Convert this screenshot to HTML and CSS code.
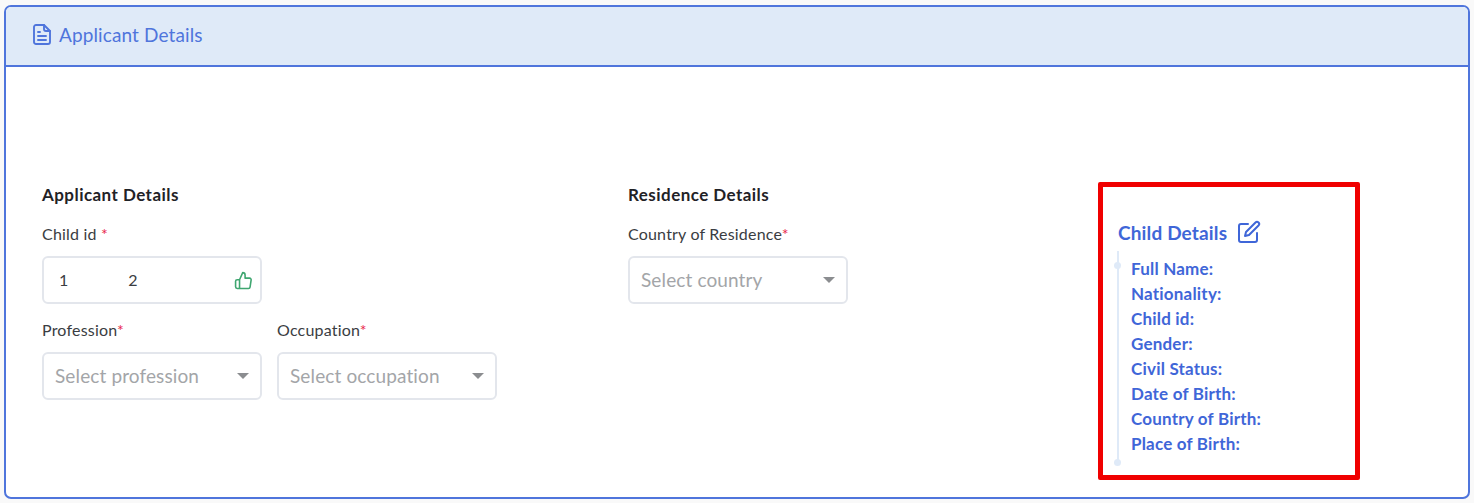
FILE: index.html
```html
<!DOCTYPE html>
<html lang="en">
<head>
<meta charset="utf-8">
<title>Applicant Details</title>
<link rel="stylesheet" href="styles.css">
</head>
<body>
<main class="card">
  <header class="card-header">
    <svg class="header-icon" viewBox="0 0 18 21" fill="none" stroke="currentColor" stroke-width="1.9" stroke-linecap="round" stroke-linejoin="round">
      <path d="M3 1h8l6 6v11a2 2 0 0 1-2 2H3a2 2 0 0 1-2-2V3a2 2 0 0 1 2-2z"/>
      <path d="M11 1v4a2 2 0 0 0 2 2h4"/>
      <path d="M5 8h2M5 12h8M5 16h8"/>
    </svg>
    <h1 class="card-title">Applicant Details</h1>
  </header>
  <div class="card-body">
    <section class="col-applicant">
      <h2 class="section-title">Applicant Details</h2>
      <div class="field-grid">
        <div class="field">
          <label class="field-label">Child id <span class="req">*</span></label>
          <div class="control">
            <span class="value-group"><span>1</span><span>2</span></span>
            <svg class="thumb" viewBox="0 0 24 24" fill="none" stroke="currentColor" stroke-width="2" stroke-linecap="round" stroke-linejoin="round">
              <path d="M14 9V5a3 3 0 0 0-3-3l-4 9v11h11.28a2 2 0 0 0 2-1.7l1.38-9a2 2 0 0 0-2-2.3zM7 22H4a2 2 0 0 1-2-2v-7a2 2 0 0 1 2-2h3"/>
            </svg>
          </div>
        </div>
        <div></div>
        <div class="field">
          <label class="field-label">Profession<span class="req">*</span></label>
          <div class="control">
            <span class="placeholder">Select profession</span><span class="caret"></span>
          </div>
        </div>
        <div class="field">
          <label class="field-label">Occupation<span class="req">*</span></label>
          <div class="control">
            <span class="placeholder">Select occupation</span><span class="caret"></span>
          </div>
        </div>
      </div>
    </section>
    <section class="col-residence">
      <h2 class="section-title">Residence Details</h2>
      <div class="field">
        <label class="field-label">Country of Residence<span class="req">*</span></label>
        <div class="control">
          <span class="placeholder">Select country</span><span class="caret"></span>
        </div>
      </div>
    </section>
    <aside class="child-box">
      <div class="child-head">
        <h2 class="child-title">Child Details</h2>
        <svg class="edit" viewBox="0 0 24 24" fill="none" stroke="currentColor" stroke-width="2" stroke-linecap="round" stroke-linejoin="round">
          <path d="M11 4H4a2 2 0 0 0-2 2v14a2 2 0 0 0 2 2h14a2 2 0 0 0 2-2v-7"/>
          <path d="M18.5 2.5a2.121 2.121 0 0 1 3 3L12 15l-4 1 1-4 9.5-9.5z"/>
        </svg>
      </div>
      <ul class="child-list">
        <li>Full Name:</li>
        <li>Nationality:</li>
        <li>Child id:</li>
        <li>Gender:</li>
        <li>Civil Status:</li>
        <li>Date of Birth:</li>
        <li>Country of Birth:</li>
        <li>Place of Birth:</li>
      </ul>
    </aside>
  </div>
</main>
</body>
</html>
```
FILE: styles.css
```css
* { box-sizing: border-box; }
html, body { margin: 0; padding: 0; }
body {
  background: #f9f9f9;
  font-family: "Lato", "Open Sans", sans-serif;
  height: 503px;
  overflow: hidden;
  padding: 5px 4px 4px 4px;
}
.card {
  height: 494px;
  background: #fff;
  border: 2px solid #4f75dc;
  border-radius: 7px;
  overflow: hidden;
}
.card-header {
  height: 60px;
  background: #dfeaf8;
  border-bottom: 2px solid #4f75dc;
  display: flex;
  align-items: center;
  gap: 8px;
  padding: 0 0 3px 27px;
  color: #4f75dc;
}
.header-icon { width: 18px; height: 21px; flex: none; }
.card-title { margin: 0; font-size: 19px; font-weight: 400; letter-spacing: 0.12px; }
.card-body {
  display: flex;
  align-items: flex-start;
  padding: 115px 0 0 36px;
}
.col-applicant { width: 455px; margin-right: 131px; }
.col-residence { width: 220px; margin-right: 250px; }
.section-title {
  margin: 0 0 19px;
  padding-top: 3px;
  font-size: 17px;
  line-height: 20px;
  font-weight: 700;
  letter-spacing: 0.45px;
  color: #1f2226;
}
.field-grid {
  display: grid;
  grid-template-columns: 220px 220px;
  column-gap: 15px;
  row-gap: 16px;
}
.field-label {
  display: block;
  font-size: 16px;
  line-height: 20px;
  margin-bottom: 12px;
  letter-spacing: 0.2px;
  color: #3a3d42;
}
.req { color: #e8274b; }
.control {
  height: 48px;
  border: 2px solid #e3e6ec;
  border-radius: 6px;
  background: #fff;
  display: flex;
  align-items: center;
  justify-content: space-between;
  padding: 0 7px 0 11px;
  font-size: 19px;
}
.value-group {
  display: flex;
  gap: 60px;
  padding: 0 0 2px 4px;
  font-size: 16px;
  color: #3a3d42;
}
.thumb { width: 19px; height: 19px; color: #3fa670; }
.placeholder { color: #a3a5a8; letter-spacing: 0.12px; padding-bottom: 1px; }
.caret {
  width: 0;
  height: 0;
  margin-right: 4px;
  border-left: 6px solid transparent;
  border-right: 6px solid transparent;
  border-top: 6px solid #8b8d90;
}
.child-box {
  width: 262px;
  height: 298px;
  flex: none;
  border: 5px solid #f00000;
  border-radius: 2px;
  padding: 33px 0 0 15px;
  color: #3f66d8;
}
.child-head { display: flex; align-items: center; gap: 10px; height: 24px; }
.child-title { margin: 0; font-size: 19px; font-weight: 700; letter-spacing: 0.15px; color: #3f66d8; }
.edit { width: 24px; height: 24px; }
.child-list {
  position: relative;
  list-style: none;
  margin: 12px 0 0;
  padding: 0 0 3px 13px;
  font-size: 17px;
  font-weight: 700;
  letter-spacing: 0.2px;
  line-height: 25px;
}
.child-list::before {
  content: "";
  position: absolute;
  left: -1px;
  top: -5px;
  bottom: -3px;
  width: 2px;
  background: #dfeaf8;
}
.child-list::after {
  content: "";
  position: absolute;
  left: -4px;
  bottom: -7px;
  width: 7px;
  height: 7px;
  border-radius: 50%;
  background: #dfeaf8;
  box-shadow: 0 -197px 0 #dfeaf8;
}
```
